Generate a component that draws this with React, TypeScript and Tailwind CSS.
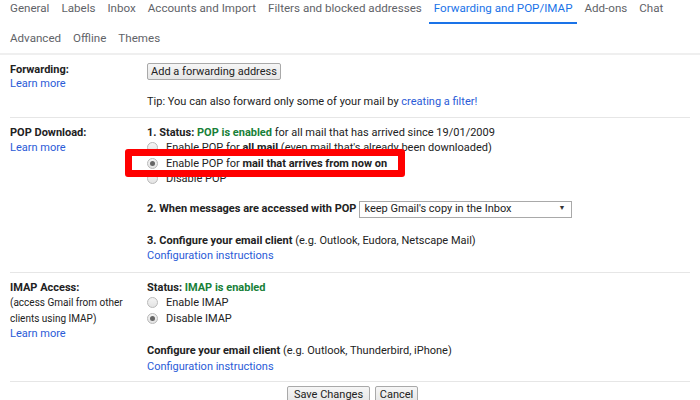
import React from 'react';

const tabsTop = ['General', 'Labels', 'Inbox', 'Accounts and Import', 'Filters and blocked addresses', 'Forwarding and POP/IMAP', 'Add-ons', 'Chat'];
const tabsBottom = ['Advanced', 'Offline', 'Themes'];

const Radio: React.FC<{ checked?: boolean }> = ({ checked }) => (
  <span className="inline-flex w-[11px] h-[11px] rounded-full border border-[#b9b9b9] bg-gradient-to-b from-[#f4f4f4] to-[#e3e3e3] items-center justify-center mr-[8px] shrink-0">
    {checked && <span className="w-[5px] h-[5px] rounded-full bg-[#666]" />}
  </span>
);

const Btn: React.FC<{ children: React.ReactNode; w: string }> = ({ children, w }) => (
  <button className={`${w} h-[17px] text-[11px] leading-[15px] text-[#222] bg-gradient-to-b from-[#f6f6f6] to-[#e6e6e6] border border-[#a9a9a9] rounded-[2px] whitespace-nowrap`}>
    {children}
  </button>
);

const Link: React.FC<{ children: React.ReactNode }> = ({ children }) => (
  <span className="text-[#2a5bd7]">{children}</span>
);

const App: React.FC = () => {
  return (
    <div className="relative w-[700px] h-[400px] overflow-hidden bg-white text-[11px] leading-[15.5px] text-[#222]" style={{ fontFamily: 'Roboto, "Liberation Sans", Arial, sans-serif' }}>
      {/* tabs */}
      <div className="px-[10px] text-[11.6px] text-[#5f6368] whitespace-nowrap">
        <div className="flex gap-[12px] h-[24px] items-start">
          {tabsTop.map((t, i) => (
            <div key={t} className={i === 5 ? 'text-[#1a73e8] border-b-2 border-[#1a73e8] px-[5px] -mx-[5px] h-[24px] leading-[17px]' : 'leading-[17px]'}>{t}</div>
          ))}
        </div>
        <div className="flex gap-[12px] pt-[6px] h-[29px] leading-[17px]">
          {tabsBottom.map(t => <div key={t}>{t}</div>)}
        </div>
      </div>
      <div className="h-[2px] bg-[#efefef]" />

      {/* forwarding */}
      <div className="mx-[10px] flex pt-[8px] pb-[7px] border-b border-[#e6e6e6]">
        <div className="w-[137px] shrink-0 leading-[14px]">
          <div className="font-bold">Forwarding:</div>
          <Link>Learn more</Link>
        </div>
        <div className="flex flex-col items-start">
          <Btn w="w-[134px]">Add a forwarding address</Btn>
          <div className="mt-[14px]">Tip: You can also forward only some of your mail by <Link>creating a filter!</Link></div>
        </div>
      </div>

      {/* pop */}
      <div className="mx-[10px] flex pt-[7px] pb-[8px] border-b border-[#e6e6e6]">
        <div className="w-[137px] shrink-0">
          <div className="font-bold">POP Download:</div>
          <Link>Learn more</Link>
        </div>
        <div className="flex flex-col items-start">
          <div><span className="font-bold">1. Status: </span><span className="font-bold text-[#188038]">POP is enabled</span> for all mail that has arrived since 19/01/2009</div>
          <div className="flex items-center"><Radio />Enable POP for&nbsp;<span className="font-bold">all mail</span>&nbsp;(even mail that's already been downloaded)</div>
          <div className="flex items-center"><Radio checked />Enable POP for&nbsp;<span className="font-bold">mail that arrives from now on</span></div>
          <div className="flex items-center"><Radio />Disable POP</div>
          <div className="flex items-center mt-[14px]">
            <span className="font-bold">2. When messages are accessed with POP</span>
            <div className="ml-[3px] w-[213px] h-[17px] border border-[#a9a9a9] flex items-center justify-between pl-[4px] pr-[6px]">
              <span>keep Gmail's copy in the Inbox</span>
              <span className="text-[7px] text-[#333]">▼</span>
            </div>
          </div>
          <div className="mt-[15px]"><span className="font-bold">3. Configure your email client</span> (e.g. Outlook, Eudora, Netscape Mail)</div>
          <Link>Configuration instructions</Link>
        </div>
      </div>

      {/* imap */}
      <div className="mx-[10px] flex pt-[7px] pb-[7px] border-b border-[#e6e6e6]">
        <div className="w-[137px] shrink-0">
          <div className="font-bold">IMAP Access:</div>
          <div className="text-[10px]">(access Gmail from other</div>
          <div className="text-[10px]">clients using IMAP)</div>
          <Link>Learn more</Link>
        </div>
        <div className="flex flex-col items-start">
          <div><span className="font-bold">Status: </span><span className="font-bold text-[#188038]">IMAP is enabled</span></div>
          <div className="flex items-center"><Radio />Enable IMAP</div>
          <div className="flex items-center"><Radio checked />Disable IMAP</div>
          <div className="mt-[17px]"><span className="font-bold">Configure your email client</span> (e.g. Outlook, Thunderbird, iPhone)</div>
          <Link>Configuration instructions</Link>
        </div>
      </div>

      <div className="flex gap-[5px] pt-[4px] pl-[287px]">
        <Btn w="w-[83px]">Save Changes</Btn>
        <Btn w="w-[43px]">Cancel</Btn>
      </div>

      {/* red highlight */}
      <div className="absolute left-[125px] top-[149px] w-[280px] h-[28px] border-[7px] border-[#ff0000] rounded-[3px]" />
    </div>
  );
};

export default App;
